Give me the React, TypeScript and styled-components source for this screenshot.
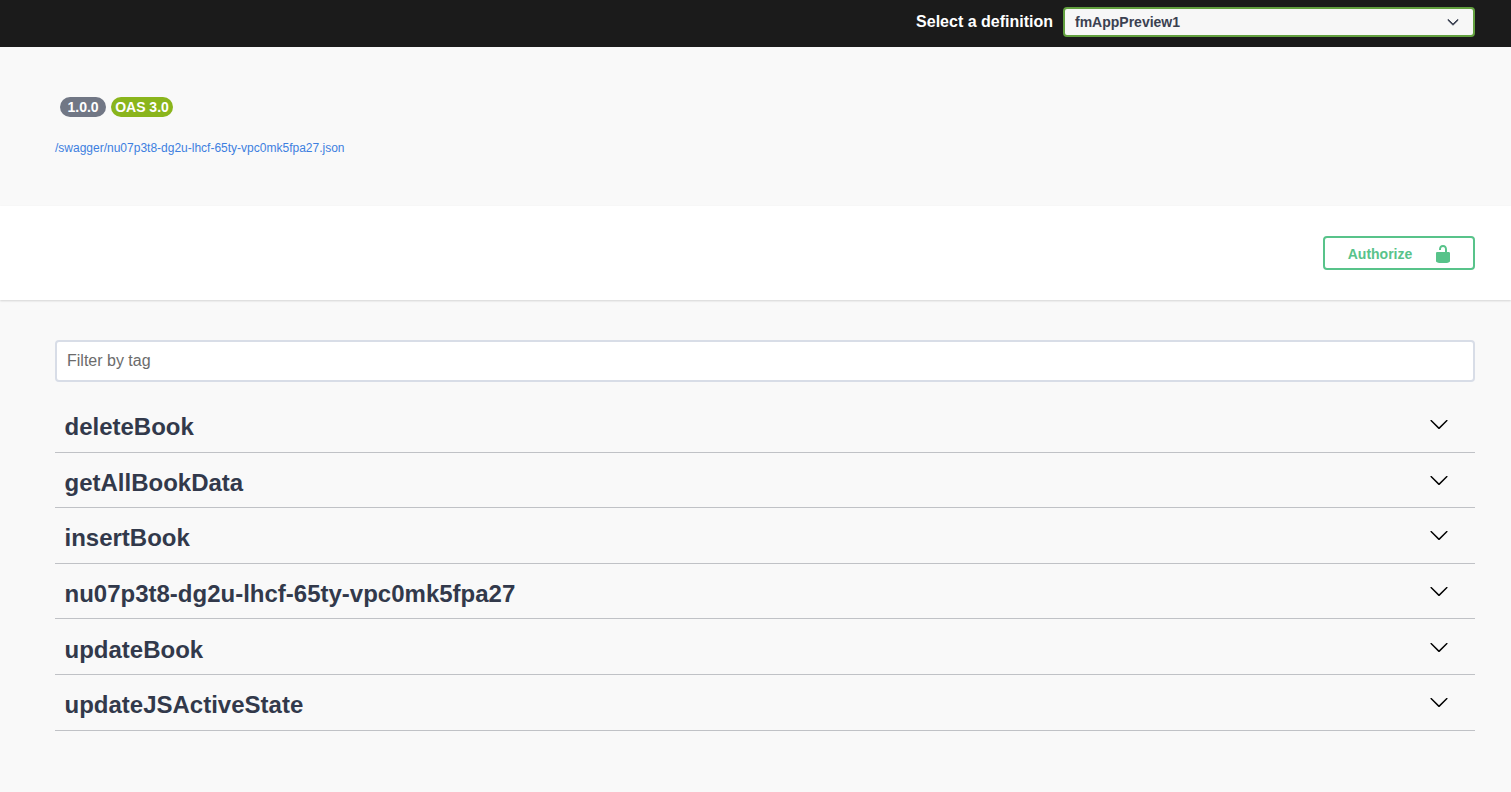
import styled, { createGlobalStyle } from "styled-components";

const tags = [
  "deleteBook",
  "getAllBookData",
  "insertBook",
  "nu07p3t8-dg2u-lhcf-65ty-vpc0mk5fpa27",
  "updateBook",
  "updateJSActiveState",
];

function Chevron({ size, weight = 0 }: { size: number; weight?: number }) {
  return (
    <svg
      width={size}
      height={size}
      viewBox="0 0 20 20"
      fill="currentColor"
      stroke="currentColor"
      strokeWidth={weight}
    >
      <path d="M17.418 6.109c.272-.268.709-.268.979 0s.271.701 0 .969l-7.908 7.83c-.27.268-.707.268-.979 0l-7.908-7.83c-.27-.268-.27-.701 0-.969.271-.268.709-.268.979 0L10 13.25l7.418-7.141z" />
    </svg>
  );
}

export default function App() {
  return (
    <>
      <GlobalStyle />
      <Topbar>
        <DefinitionLabel>Select a definition</DefinitionLabel>
        <DefinitionSelect>
          <span>fmAppPreview1</span>
          <Chevron size={12} weight={1.6} />
        </DefinitionSelect>
      </Topbar>
      <Info>
        <Badges>
          <Badge color="#717785" inset={7.5}>1.0.0</Badge>
          <Badge color="#8ab51c" inset={4}>OAS 3.0</Badge>
        </Badges>
        <SpecLink href="#">/swagger/nu07p3t8-dg2u-lhcf-65ty-vpc0mk5fpa27.json</SpecLink>
      </Info>
      <SchemeBar>
        <AuthorizeButton>
          <span>Authorize</span>
          <svg width="20" height="20" viewBox="0 0 20 20" fill="currentColor">
            <path d="M15.8 8H14V5.6C14 2.703 12.665 1 10 1 7.334 1 6 2.703 6 5.6V6h2v-.801C8 3.754 8.797 3 10 3c1.203 0 2 .754 2 2.199V8H4c-.553 0-1 .646-1 1.199V17c0 .549.428 1.139.951 1.307l1.197.387C5.672 18.861 6.55 19 7.1 19h5.8c.549 0 1.428-.139 1.951-.307l1.196-.387c.524-.167.953-.757.953-1.306V9.199C17 8.646 16.352 8 15.8 8z" />
          </svg>
        </AuthorizeButton>
      </SchemeBar>
      <Main>
        <FilterInput placeholder="Filter by tag" />
        <TagList>
          {tags.map((tag) => (
            <TagRow key={tag}>
              <TagName>{tag}</TagName>
              <TagToggle>
                <Chevron size={20} />
              </TagToggle>
            </TagRow>
          ))}
        </TagList>
      </Main>
    </>
  );
}

const GlobalStyle = createGlobalStyle`
  html, body {
    margin: 0;
    background: #f9f9f9;
    font-family: "Liberation Sans", Arial, sans-serif;
  }
  * {
    box-sizing: border-box;
  }
`;

const Topbar = styled.header`
  display: flex;
  justify-content: flex-end;
  align-items: center;
  height: 47px;
  padding: 0 36px 3px 0;
  background: #1b1b1b;
`;

const DefinitionLabel = styled.span`
  margin-right: 10px;
  color: #fff;
  font-size: 16px;
  font-weight: 700;
`;

const DefinitionSelect = styled.div`
  display: flex;
  justify-content: space-between;
  align-items: center;
  width: 412px;
  height: 30px;
  padding: 0 14px 0 10px;
  background: #f7f7f7;
  border: 2px solid #62a03f;
  border-radius: 4px;
  color: #3b4151;
  font-size: 14px;
  font-weight: 700;
`;

const Info = styled.section`
  height: 159px;
  padding: 50px 0 0 55px;
`;

const Badges = styled.div`
  display: flex;
  gap: 5px;
  padding-left: 5px;
`;

const Badge = styled.span<{ color: string; inset: number }>`
  height: 20px;
  padding: 0 ${(props) => props.inset}px;
  background: ${(props) => props.color};
  border-radius: 10px;
  color: #fff;
  font-size: 14px;
  font-weight: 700;
  line-height: 20px;
`;

const SpecLink = styled.a`
  display: block;
  margin-top: 23px;
  color: #3d7fe0;
  font-size: 12px;
  line-height: 16px;
  text-decoration: none;
`;

const SchemeBar = styled.section`
  display: flex;
  justify-content: flex-end;
  align-items: flex-start;
  height: 94px;
  padding: 30px 36px 0 0;
  background: #fff;
  box-shadow: 0 1px 2px 0 rgba(0, 0, 0, 0.15);
`;

const AuthorizeButton = styled.button`
  display: flex;
  justify-content: center;
  align-items: center;
  gap: 21px;
  width: 152px;
  height: 34px;
  padding: 2px 0 0 3px;
  background: transparent;
  border: 2px solid #58c38a;
  border-radius: 4px;
  color: #58c38a;
  font-family: inherit;
  font-size: 14px;
  font-weight: 700;
`;

const Main = styled.main`
  padding: 40px 36px 0 55px;
`;

const FilterInput = styled.input`
  display: block;
  width: 100%;
  height: 42px;
  padding: 0 10px;
  background: #fff;
  border: 2px solid #d8dde7;
  border-radius: 4px;
  outline: none;
  font-family: inherit;
  font-size: 16px;

  &::placeholder {
    color: #6b6b6b;
    opacity: 1;
  }
`;

const TagList = styled.div`
  margin-top: 15px;
`;

const TagRow = styled.div`
  display: flex;
  justify-content: space-between;
  align-items: center;
  height: 55.6px;
  padding: 6px 26px 0 9.5px;
  border-bottom: 1px solid rgba(59, 65, 81, 0.3);
`;

const TagName = styled.h3`
  margin: 0;
  color: #32394b;
  font-size: 24px;
  font-weight: 700;
`;

const TagToggle = styled.span`
  display: flex;
  padding-bottom: 6px;
  color: #000;
`;
